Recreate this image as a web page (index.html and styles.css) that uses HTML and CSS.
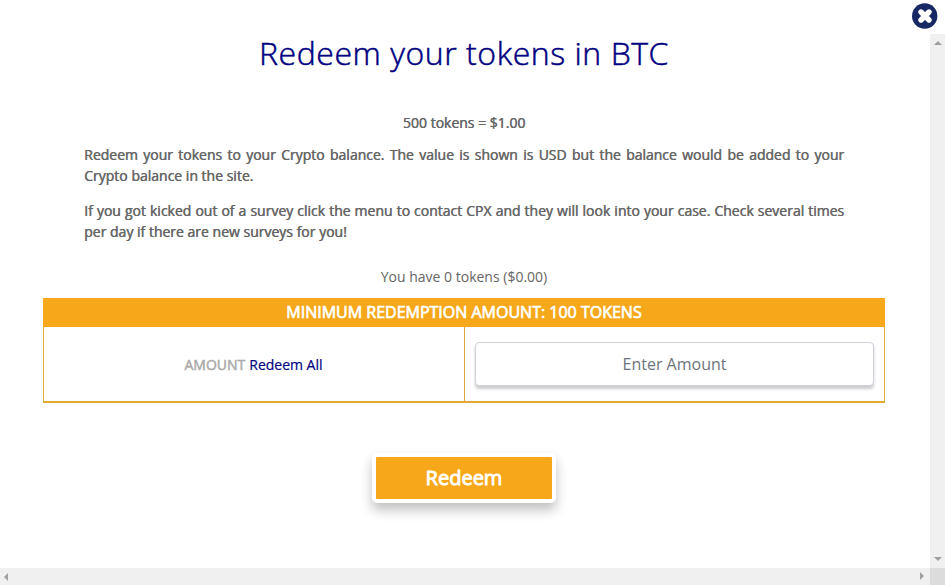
FILE: index.html
```
<!DOCTYPE html>
<html lang="en">
<head>
    <meta charset="UTF-8">
    <meta name="viewport" content="width=device-width, initial-scale=1.0">
    <title>Redeem your tokens in BTC</title>
    <link rel="stylesheet" href="styles.css">
</head>
<body>
    <div class="modal">
        <main class="content">
            <h1>Redeem your tokens in BTC</h1>
            <div class="info">
                <p class="rate">500 tokens = $1.00</p>
                <p>Redeem your tokens to your Crypto balance. The value is shown is USD but the balance would be added to your Crypto balance in the site.</p>
                <p>If you got kicked out of a survey click the menu to contact CPX and they will look into your case. Check several times per day if there are new surveys for you!</p>
            </div>
            <div class="balance">You have 0 tokens ($0.00)</div>
            <div class="redeem-table">
                <div class="table-head">MINIMUM REDEMPTION AMOUNT: 100 TOKENS</div>
                <div class="table-row">
                    <div class="cell amount"><span class="label">AMOUNT</span> <a class="redeem-all">Redeem All</a></div>
                    <div class="cell field"><input type="text" class="amount-input" placeholder="Enter Amount"></div>
                </div>
            </div>
            <button class="redeem-btn">Redeem</button>
        </main>
        <div class="scroll-y">
            <svg width="15" height="17" viewBox="0 0 15 17"><path d="M4 11h8L8 7z"/></svg>
            <svg width="15" height="17" viewBox="0 0 15 17"><path d="M4 6h8L8 10z"/></svg>
        </div>
        <div class="scroll-x">
            <svg width="17" height="17" viewBox="0 0 17 17"><path d="M8 5v8L4 9z"/></svg>
            <svg width="17" height="17" viewBox="0 0 17 17"><path d="M7 4v8l4-4z"/></svg>
        </div>
        <div class="corner"></div>
    </div>
    <button class="close-btn" aria-label="Close">
        <svg width="26" height="26" viewBox="0 0 26 26">
            <circle cx="12.7" cy="13" r="12.7" fill="#182864"/>
            <path d="M9 9l8 8M17 9l-8 8" stroke="#fff" stroke-width="5.4" stroke-linecap="round"/>
        </svg>
    </button>
</body>
</html>
```
FILE: styles.css
```
* {
    box-sizing: border-box;
}
body {
    margin: 0;
    font-family: "Open Sans", sans-serif;
    background-color: #fff;
    color: #666;
    overflow: hidden;
}
.modal {
    display: grid;
    grid-template-columns: 1fr 15px;
    grid-template-rows: 568px 17px;
    height: 585px;
}
.content {
    padding: 30px 45px 0 43px;
    text-align: center;
}
h1 {
    margin: 0;
    font-size: 32px;
    font-weight: 300;
    line-height: 45px;
    letter-spacing: 0.55px;
    color: navy;
    -webkit-text-stroke: 0.5px navy;
}
.info {
    margin: 37px 41px 0;
    font-size: 14px;
    line-height: 21px;
    text-align: justify;
    text-shadow: 0.5px 0 0 #666;
}
.info p {
    margin: 0 0 14px;
}
.info .rate {
    margin-bottom: 11px;
    text-align: center;
}
.balance {
    margin-top: 24px;
    font-size: 14px;
    line-height: 21px;
}
.redeem-table {
    margin-top: 11px;
    border: 1px solid #e1a93a;
    border-bottom-width: 2px;
}
.table-head {
    margin: -1px -1px 0;
    height: 29px;
    background-color: #f6a81a;
    color: #fff;
    font-size: 16px;
    line-height: 29px;
    -webkit-text-stroke: 0.7px #fff;
}
.table-row {
    display: grid;
    grid-template-columns: 421px 1fr;
    height: 74px;
}
.cell {
    display: flex;
    align-items: center;
    justify-content: center;
    gap: 4px;
}
.amount {
    padding: 1px 1px 0 0;
    border-right: 1px solid #e1a93a;
    font-size: 14px;
}
.label {
    color: #aaa;
    -webkit-text-stroke: 0.5px #aaa;
}
.redeem-all {
    color: navy;
    -webkit-text-stroke: 0.2px navy;
}
.field {
    padding: 0 10px;
}
.amount-input {
    width: 100%;
    height: 44px;
    padding: 0 0 1px;
    border: 1px solid #ced4da;
    border-radius: 4px;
    box-shadow: 0 3px 3px rgba(0, 0, 0, 0.2);
    font-family: inherit;
    font-size: 16px;
    text-align: center;
}
.amount-input::placeholder {
    color: #6c757d;
}
.redeem-btn {
    width: 184px;
    height: 50px;
    margin-top: 50px;
    padding: 0 0 2px;
    border: 4px solid #fff;
    border-radius: 5px;
    background-color: #f6a81a;
    box-shadow: 0 7px 12px rgba(0, 0, 0, 0.25);
    color: #fff;
    font-family: inherit;
    font-size: 20px;
    -webkit-text-stroke: 0.9px #fff;
}
.scroll-y {
    display: flex;
    flex-direction: column;
    justify-content: space-between;
    margin-top: 34px;
    background-color: #f0f0f0;
}
.scroll-x {
    display: flex;
    justify-content: space-between;
    background-color: #f0f0f0;
}
.scroll-y svg,
.scroll-x svg {
    display: block;
    fill: #a0a0a0;
}
.corner {
    background-color: #dcdcdc;
}
.close-btn {
    position: absolute;
    top: 3px;
    right: 7px;
    padding: 0;
    border: none;
    background: none;
    cursor: pointer;
}
.close-btn svg {
    display: block;
}
```
